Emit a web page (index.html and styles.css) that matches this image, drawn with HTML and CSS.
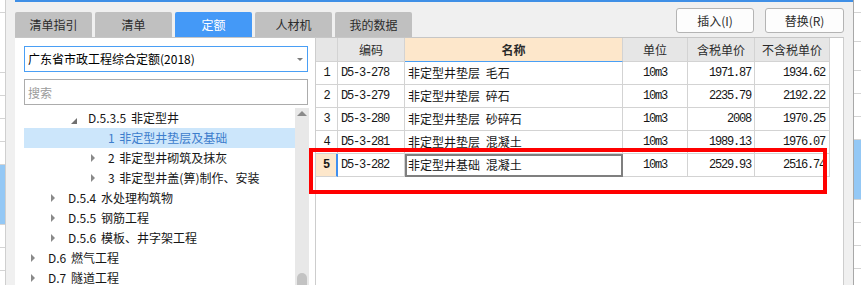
FILE: index.html
```html
<!DOCTYPE html>
<html lang="zh-CN">
<head>
    <meta charset="UTF-8">
    <meta name="viewport" content="width=device-width, initial-scale=1.0">
    <title>定额</title>
    <link rel="stylesheet" href="styles.css">
</head>
<body>

    <!-- hoja de fondo, lado izquierdo -->
    <div class="sheet sheet-left">
        <div class="sheet-cell short"></div>
        <div class="sheet-cell tall"></div>
        <div class="sheet-cell"></div>
        <div class="sheet-cell"></div>
        <div class="sheet-cell"></div>
        <div class="sheet-cell"></div>
        <div class="sheet-cell tall sel"></div>
        <div class="sheet-cell"></div>
        <div class="sheet-cell"></div>
        <div class="sheet-cell"></div>
    </div>

    <div class="dialog">
        <div class="topbar">
            <div class="tabs">
                <div class="tab">清单指引</div>
                <div class="tab">清单</div>
                <div class="tab active">定额</div>
                <div class="tab">人材机</div>
                <div class="tab">我的数据</div>
            </div>
            <div class="actions">
                <button class="button">插入(I)</button>
                <button class="button">替换(R)</button>
            </div>
        </div>

        <div class="main">
            <div class="side">
                <div class="select">
                    <span>广东省市政工程综合定额(2018)</span>
                    <span class="caret"></span>
                </div>
                <input class="search" type="text" placeholder="搜索">

                <div class="tree-wrap">
                    <ul class="tree">
                        <li class="lv2"><span class="arrow open"></span>D.5.3.5 非定型井</li>
                        <li class="lv3 selected"><span class="arrow"></span>1 非定型井垫层及基础</li>
                        <li class="lv3"><span class="arrow closed"></span>2 非定型井砌筑及抹灰</li>
                        <li class="lv3"><span class="arrow closed"></span>3 非定型井盖(箅)制作、安装</li>
                        <li class="lv1"><span class="arrow closed"></span>D.5.4 水处理构筑物</li>
                        <li class="lv1"><span class="arrow closed"></span>D.5.5 钢筋工程</li>
                        <li class="lv1"><span class="arrow closed"></span>D.5.6 模板、井字架工程</li>
                        <li class="lv0"><span class="arrow closed"></span>D.6 燃气工程</li>
                        <li class="lv0"><span class="arrow closed"></span>D.7 隧道工程</li>
                    </ul>
                    <div class="scrollbar">
                        <span class="scroll-up"></span>
                        <span class="scroll-thumb"></span>
                    </div>
                </div>
            </div>

            <div class="grid-panel">
                <table class="grid">
                    <colgroup>
                        <col class="c-num">
                        <col class="c-code">
                        <col class="c-name">
                        <col class="c-unit">
                        <col class="c-price">
                        <col class="c-price2">
                    </colgroup>
                    <thead>
                        <tr>
                            <th></th>
                            <th>编码</th>
                            <th class="name">名称</th>
                            <th>单位</th>
                            <th>含税单价</th>
                            <th>不含税单价</th>
                        </tr>
                    </thead>
                    <tbody>
                        <tr>
                            <td class="num">1</td>
                            <td class="code">D5-3-278</td>
                            <td>非定型井垫层 毛石</td>
                            <td class="unit">10m3</td>
                            <td class="price">1971.87</td>
                            <td class="price last">1934.62</td>
                        </tr>
                        <tr>
                            <td class="num">2</td>
                            <td class="code">D5-3-279</td>
                            <td>非定型井垫层 碎石</td>
                            <td class="unit">10m3</td>
                            <td class="price">2235.79</td>
                            <td class="price last">2192.22</td>
                        </tr>
                        <tr>
                            <td class="num">3</td>
                            <td class="code">D5-3-280</td>
                            <td>非定型井垫层 砂碎石</td>
                            <td class="unit">10m3</td>
                            <td class="price">2008</td>
                            <td class="price last">1970.25</td>
                        </tr>
                        <tr>
                            <td class="num">4</td>
                            <td class="code">D5-3-281</td>
                            <td>非定型井垫层 混凝土</td>
                            <td class="unit">10m3</td>
                            <td class="price">1989.13</td>
                            <td class="price last">1976.07</td>
                        </tr>
                        <tr class="current">
                            <td class="num">5</td>
                            <td class="code">D5-3-282</td>
                            <td class="focus">非定型井基础 混凝土</td>
                            <td class="unit">10m3</td>
                            <td class="price">2529.93</td>
                            <td class="price last">2516.74</td>
                        </tr>
                    </tbody>
                </table>
            </div>
        </div>
    </div>

    <!-- hoja de fondo, lado derecho -->
    <div class="sheet sheet-right">
        <div class="sheet-cell short"></div>
        <div class="sheet-cell mid"></div>
        <div class="sheet-cell mid"></div>
        <div class="sheet-cell"></div>
        <div class="sheet-cell"></div>
        <div class="sheet-cell"></div>
        <div class="sheet-cell tall sel"></div>
        <div class="sheet-cell"></div>
        <div class="sheet-cell"></div>
        <div class="sheet-cell"></div>
    </div>

    <!-- marca roja de anotación -->
    <div class="mark"></div>

</body>
</html>
```

FILE: styles.css
```css
* {
    box-sizing: border-box;
}
body {
    margin: 0;
    width: 861px;
    height: 285px;
    overflow: hidden;
    position: relative;
    display: flex;
    background-color: #fff;
    font-family: "Noto Sans CJK SC", "Microsoft YaHei", sans-serif;
    font-size: 12px;
    line-height: 1;
    color: #161616;
}

/* hoja de cálculo detrás del diálogo */
.sheet {
    display: flex;
    flex-direction: column;
    background-color: #fff;
}
.sheet-left {
    width: 5px;
}
.sheet-right {
    width: 7px;
}
.sheet-cell {
    height: 23px;
    flex: none;
    border-bottom: 1px solid #d4d4d4;
}
.sheet-cell.short {
    height: 13px;
}
.sheet-cell.mid {
    height: 29px;
}
.sheet-cell.tall {
    height: 60px;
}
.sheet-cell.sel {
    background-color: #94c8f5;
}

/* diálogo */
.dialog {
    width: 850px;
    height: 285px;
    display: flex;
    flex-direction: column;
    background-color: #f0f0f0;
    border-left: 1px solid #cfcfcf;
    border-right: 1px solid #a8a8a8;
    padding-left: 9px;
}
.topbar {
    height: 37px;
    flex: none;
    display: flex;
    justify-content: space-between;
    border-top: 2px solid #3f8fe6;
}
.tabs {
    display: flex;
    gap: 3px;
    align-self: flex-end;
}
.tab {
    width: 77px;
    height: 25px;
    display: flex;
    align-items: center;
    justify-content: center;
    background-color: #c0c0c0;
    color: #2b2b2b;
    border-radius: 2px 2px 0 0;
}
.tab.active {
    background-color: #4499f7;
    color: #fff;
}
.actions {
    display: flex;
    gap: 11px;
    margin-top: 6px;
    margin-right: 9px;
}
.button {
    width: 79px;
    height: 25px;
    padding: 0;
    font-family: inherit;
    font-size: 12px;
    color: #2b2b2b;
    background-color: #fdfdfd;
    border: 1px solid #b4b4b4;
    border-radius: 3px;
}
.button:first-child {
    width: 78px;
}

.main {
    flex: 1;
    display: flex;
    padding-right: 9px;
    min-height: 0;
}

/* panel izquierdo */
.side {
    width: 301px;
    flex: none;
    display: flex;
    flex-direction: column;
    background-color: #fff;
    border-top: 1px solid #c6c6c6;
    border-right: 1px solid #cdcdcd;
    padding-left: 9px;
    min-height: 0;
}
.select {
    width: 284px;
    height: 26px;
    margin-top: 8px;
    display: flex;
    align-items: center;
    padding: 0 4px 0 3px;
    border: 1px solid #4a9ff5;
    color: #000;
}
.caret {
    margin-left: auto;
    width: 0;
    height: 0;
    border-top: 3px solid #7d7d7d;
    border-left: 3px solid transparent;
    border-right: 3px solid transparent;
}
.search {
    width: 284px;
    height: 26px;
    margin: 7px 0 0;
    padding: 0 3px;
    border: 1px solid #acacac;
    font-family: inherit;
    font-size: 12px;
    outline: none;
}
.search::placeholder {
    color: #9b9b9b;
}
.tree-wrap {
    width: 285px;
    flex: 1;
    display: flex;
    margin-top: 3px;
    overflow: hidden;
}
.tree {
    flex: 1;
    list-style: none;
    margin: 0;
    padding: 0;
    word-spacing: 2px;
}
.tree li {
    height: 20px;
    display: flex;
    align-items: center;
    white-space: pre;
    padding-left: 7px;
}
.tree li.lv1 { padding-left: 27px; }
.tree li.lv2 { padding-left: 47px; }
.tree li.lv3 { padding-left: 67px; }
.tree li.selected {
    background-color: #cce6fb;
    color: #3d7dcc;
}
.arrow {
    width: 17px;
    height: 20px;
    flex: none;
    display: flex;
    align-items: center;
}
.arrow.closed::before {
    content: "";
    border-left: 4px solid #8a8a8a;
    border-top: 4px solid transparent;
    border-bottom: 4px solid transparent;
}
.arrow.open::before {
    content: "";
    margin-top: 5px;
    border-bottom: 6px solid #707070;
    border-left: 6px solid transparent;
}
.scrollbar {
    width: 14px;
    flex: none;
    display: flex;
    flex-direction: column;
    align-items: center;
    background-color: #e8e8e8;
}
.scroll-up {
    margin-top: 3px;
    border-bottom: 5px solid #8a8a8a;
    border-left: 5px solid transparent;
    border-right: 5px solid transparent;
}
.scroll-thumb {
    margin-top: auto;
    margin-bottom: -6px;
    width: 10px;
    height: 18px;
    border-radius: 5px;
    background-color: #c3c3c3;
}

/* panel derecho con la tabla */
.grid-panel {
    flex: 1;
    background-color: #fff;
    border-top: 1px solid #c6c6c6;
    border-right: 1px solid #cdcdcd;
}
.grid {
    width: 514px;
    table-layout: fixed;
    border-collapse: separate;
    border-spacing: 0;
}
.c-num { width: 22px; }
.c-code { width: 67px; }
.c-name { width: 218px; }
.c-unit { width: 65px; }
.c-price { width: 67px; }
.c-price2 { width: 75px; }
.grid th,
.grid td {
    padding: 0 3px;
    border-right: 1px solid #d3d3d3;
    border-bottom: 1px solid #d3d3d3;
    white-space: nowrap;
    overflow: visible;
}
.grid th {
    height: 24px;
    font-weight: normal;
    background-color: #e6e6e6;
    color: #2b2b2b;
    text-align: center;
}
.grid th.name {
    background-color: #fde7cb;
    font-weight: bold;
    border-bottom-color: #4a9ff5;
}
.grid td {
    height: 23px;
    text-align: left;
    word-spacing: 3px;
}
.grid td.num,
.grid td.code,
.grid td.unit,
.grid td.price {
    font-family: "Liberation Mono", monospace;
    font-size: 12px;
    letter-spacing: -1.2px;
    word-spacing: 0;
}
.grid td.num {
    text-align: center;
    padding: 0;
}
.grid td.unit {
    text-align: center;
}
.grid td.price {
    text-align: right;
    padding-right: 3px;
}
.grid td.price.last {
    padding-right: 4px;
}
.grid tr.current td.num {
    background-color: #fde7cb;
    font-weight: bold;
    border-right: 2px solid #3f8ff0;
}
.grid td.focus {
    outline: 2px solid #7f7f7f;
    outline-offset: -2px;
}

/* recuadro rojo */
.mark {
    position: absolute;
    left: 309px;
    top: 148px;
    width: 518px;
    height: 46px;
    border: 4px solid #ff0000;
}
```
